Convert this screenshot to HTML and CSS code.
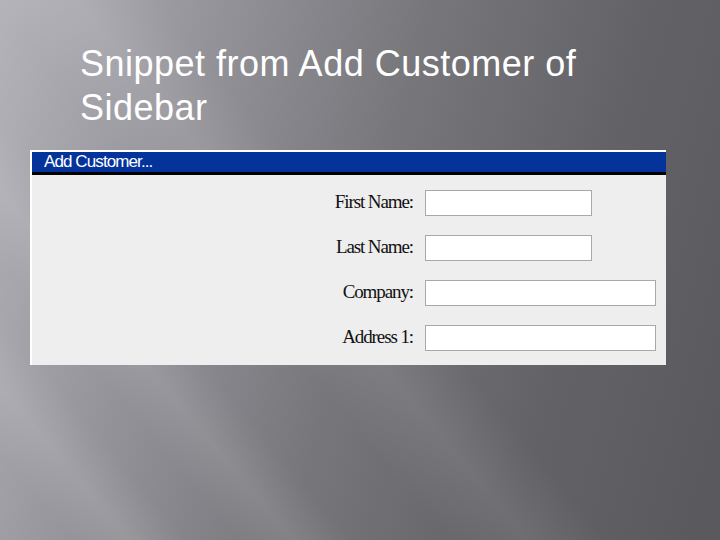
FILE: index.html
```html
<!DOCTYPE html>
<html lang="en">
<head>
<meta charset="utf-8">
<title>Snippet from Add Customer of Sidebar</title>
<link rel="stylesheet" href="styles.css">
</head>
<body>
<main class="slide">
  <h1 class="slide-title">Snippet from Add Customer of<br>Sidebar</h1>
  <section class="panel">
    <header class="panel-head">Add Customer...</header>
    <form class="panel-form">
      <label class="field-label" for="fn">First Name:</label>
      <input class="field field-short" id="fn" type="text">
      <label class="field-label" for="ln">Last Name:</label>
      <input class="field field-short" id="ln" type="text">
      <label class="field-label" for="co">Company:</label>
      <input class="field field-long" id="co" type="text">
      <label class="field-label" for="a1">Address 1:</label>
      <input class="field field-long" id="a1" type="text">
    </form>
  </section>
</main>
</body>
</html>
```
FILE: styles.css
```css
html, body {
  margin: 0;
  padding: 0;
}

body {
  width: 720px;
  height: 540px;
  overflow: hidden;
}

.slide {
  width: 720px;
  height: 540px;
  box-sizing: border-box;
  padding: 42px 54px 0 30px;
  background:
    linear-gradient(50deg,
      rgba(255,255,255,0) 0%,
      rgba(255,255,255,0) 6%,
      rgba(255,255,255,0.10) 11%,
      rgba(255,255,255,0) 16%,
      rgba(255,255,255,0) 20%,
      rgba(255,255,255,0.09) 25%,
      rgba(255,255,255,0) 30%,
      rgba(255,255,255,0) 38%,
      rgba(255,255,255,0.08) 45%,
      rgba(255,255,255,0) 52%,
      rgba(255,255,255,0) 100%),
    linear-gradient(105deg, #b5b3ba 0%, #98979d 22%, #77767b 50%, #636267 75%, #59585d 100%);
  font-family: "Liberation Sans", Arial, sans-serif;
}

.slide-title {
  margin: 0 0 20px 50px;
  font-family: "Liberation Sans", Arial, sans-serif;
  font-weight: normal;
  font-size: 36px;
  line-height: 44px;
  letter-spacing: 0.5px;
  color: #ffffff;
}

.panel {
  width: 636px;
  box-sizing: border-box;
  border-top: 2px solid #ffffff;
  border-left: 2px solid #ffffff;
  background: #eeeeee;
}

.panel-head {
  height: 20px;
  box-sizing: content-box;
  border-bottom: 3px solid #000000;
  background: #04339b;
  color: #ffffff;
  font-family: "Liberation Sans", Arial, sans-serif;
  font-size: 17px;
  letter-spacing: -0.9px;
  line-height: 20px;
  padding-left: 12px;
}

.panel-form {
  display: grid;
  grid-template-columns: 381px auto;
  column-gap: 12px;
  row-gap: 19px;
  align-items: center;
  justify-items: start;
  padding: 15px 0 14px 0;
  margin: 0;
}

.field-label {
  justify-self: end;
  margin-top: -3px;
  font-family: "Liberation Serif", "Times New Roman", serif;
  font-size: 19px;
  letter-spacing: -1.1px;
  color: #111111;
}

.field {
  height: 26px;
  box-sizing: border-box;
  border: 1px solid #a9a9a9;
  background: #ffffff;
  margin: 0;
  padding: 0 3px;
  outline: none;
}

.field-short {
  width: 167px;
}

.field-long {
  width: 231px;
}
```
